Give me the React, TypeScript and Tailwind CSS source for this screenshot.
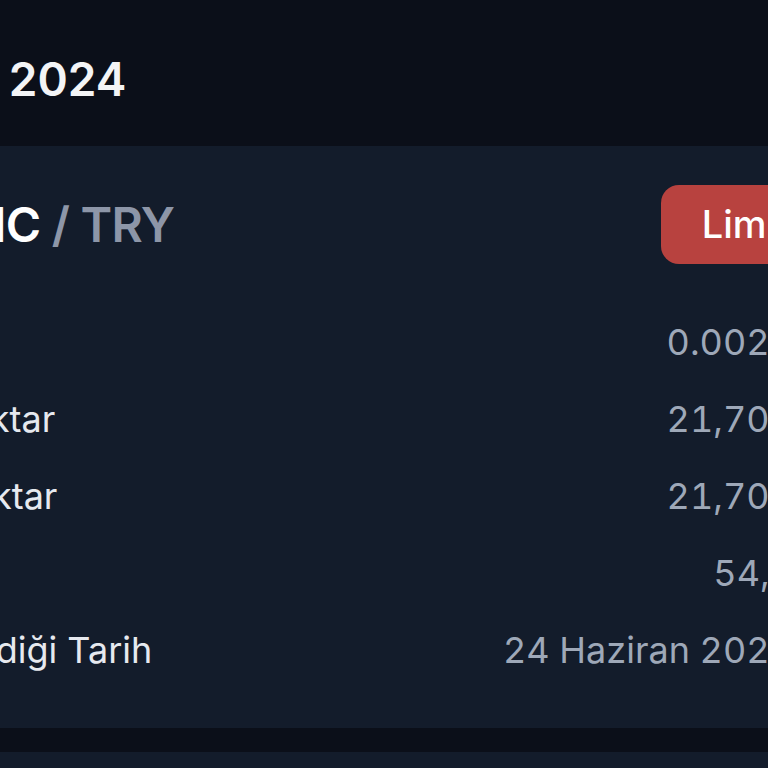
import React from 'react';

const rows = [
  { label: 'Fiyat', value: '0.0021' },
  { label: 'Emir Miktar', value: '21,701' },
  { label: 'Dolu Miktar', value: '21,701' },
  { label: 'Tutar', value: '54,1' },
  { label: 'Tetiklendiği Tarih', value: '24 Haziran 2024' },
];

export default function App() {
  return (
    <div className="w-[768px] h-[768px] overflow-hidden bg-[#0b0f19] font-['Inter','Noto_Sans',sans-serif]">
      <div className="-ml-[170px] w-[1000px] flex flex-col">
        {/* Header */}
        <div className="h-[146px] flex items-center pt-[12px]">
          <h1 className="-ml-[4px] text-[46px] font-semibold text-[#f3f4f6] whitespace-nowrap">
            Haziran 2024
          </h1>
        </div>

        {/* Order card */}
        <div className="bg-[#131c2b] pl-[33px] pt-[39px] pb-[40px]">
          <div className="h-[79px] flex items-center justify-between">
            <span className="ml-[46px] text-[48px] font-semibold tracking-[-0.015em] text-white whitespace-nowrap">
              LUNC <span className="text-[#8d96a8]">/ TRY</span>
            </span>
            <div className="h-[79px] px-[41px] flex items-center rounded-[18px] bg-[#b8423f]">
              <span className="text-[38px] font-medium text-white whitespace-nowrap">Limit</span>
            </div>
          </div>

          <div className="mt-[39px] pr-[37px] flex flex-col">
            {rows.map((row) => (
              <div key={row.label} className="h-[77px] flex items-center justify-between">
                <span className="text-[36px] text-[#e6e9ef] whitespace-nowrap">{row.label}</span>
                <span className="text-[36px] tabular-nums text-[#9ea8b8] whitespace-nowrap">{row.value}</span>
              </div>
            ))}
          </div>
        </div>

        <div className="h-[24px]" />
        <div className="bg-[#131c2b] h-[200px]" />
      </div>
    </div>
  );
}
